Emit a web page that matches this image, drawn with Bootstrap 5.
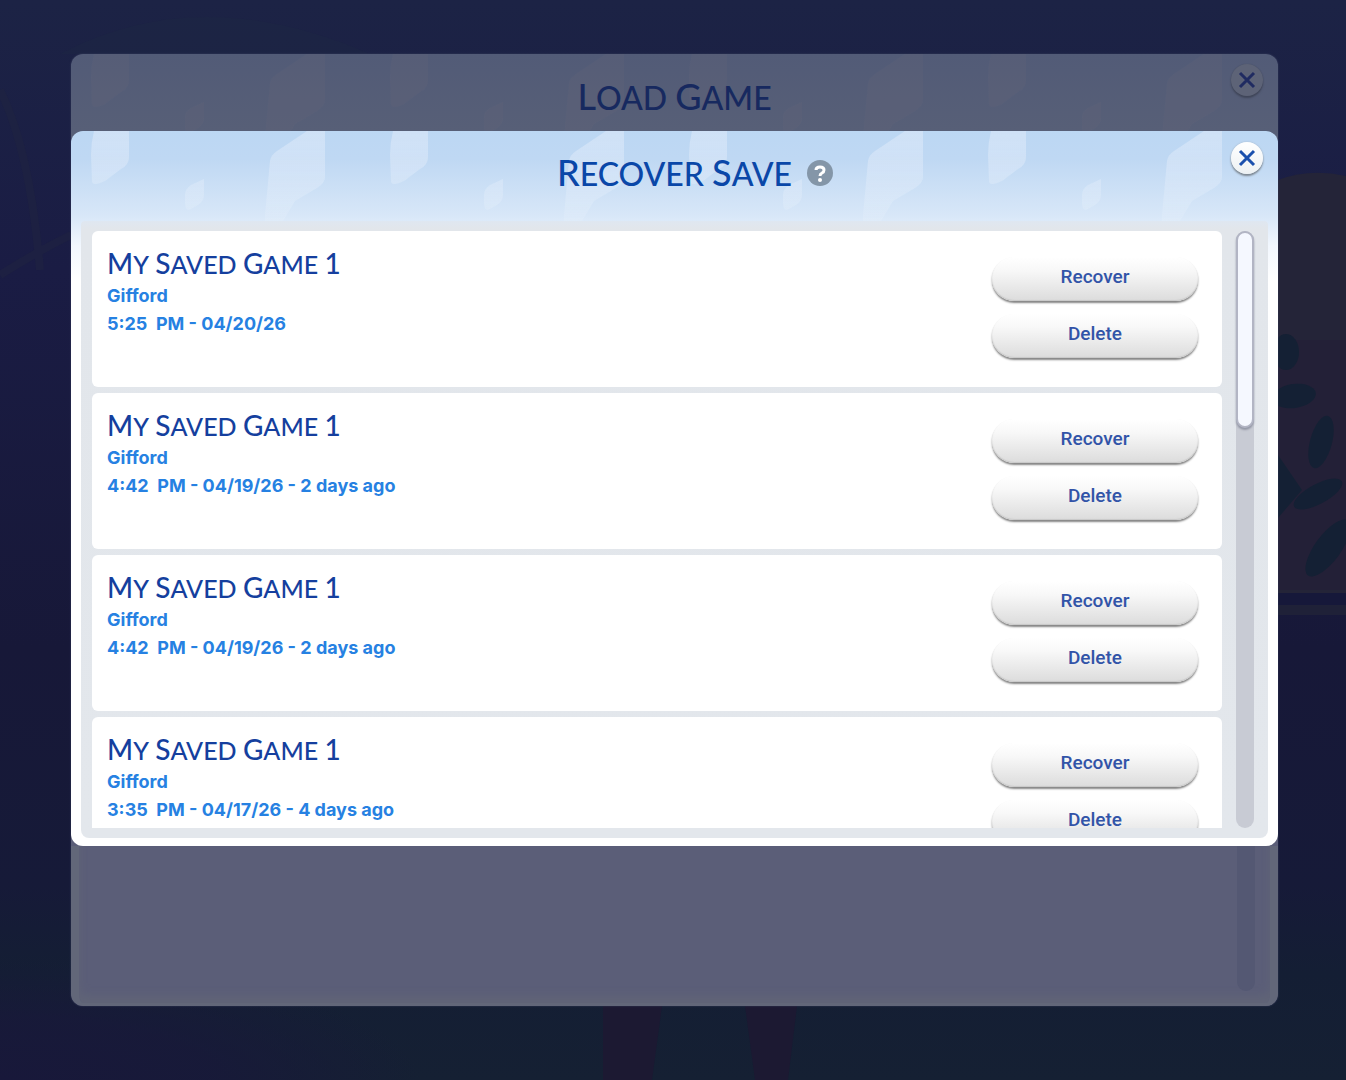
<!DOCTYPE html>
<html lang="en">
<head>
<meta charset="utf-8">
<meta name="viewport" content="width=device-width, initial-scale=1">
<title>Recover Save</title>
<link href="https://cdn.jsdelivr.net/npm/bootstrap@5.3.0/dist/css/bootstrap.min.css" rel="stylesheet">
<style>
  body { background: #181c3f; font-family: Inter, "Liberation Sans", sans-serif; }
  .stage { height: 100vh; min-height: 640px; padding: 54px 68px 74px 71px; }
  .scenery { z-index: 0; }
  .load-panel { z-index: 1; border-radius: 12px; overflow: hidden;
    background: linear-gradient(#525b77 0, #575f77 76px, #5b5e78 130px); box-shadow: 0 0 2px #3b4160; }
  .panel-head { display: grid; grid-template-columns: 1fr auto 1fr; flex: none; }
  .load-head { height: 77px; padding: 10px 15px 0; }
  .recover-head { height: 90px; padding: 11px 15px 0; }
  .shards { z-index: 0; }
  .panel-title { font-family: Lato, sans-serif; font-weight: 500; font-size: 32px; line-height: 40px;
    margin: 10px 0 0; text-transform: uppercase; color: #0a47a8; }
  .load-head .panel-title { margin-top: 12px; color: #17295f; }
  .cap-word { display: inline-block; }
  .panel-title .cap-word::first-letter { font-size: 36px; line-height: 40px; }
  .round-close { width: 32px; height: 32px; border: 0; border-radius: 50%;
    background: linear-gradient(#fff, #edf1f3); box-shadow: 0 2px 2px #7d8791, 0 0 2px #a9b6c6; }
  .round-close.dimmed { background: #5d6377; box-shadow: 0 2px 2px #3f4558, 0 0 1px #454b60; }
  .help-dot { width: 28px; height: 28px; margin: 17px 0 0 14px; }
  .recover-panel { min-height: 0; border-radius: 12px; overflow: hidden; padding-bottom: 8px;
    background: linear-gradient(#bcd7f3 0, #bfd8f3 28px, #d8e7f8 85px, #f2f7fe 115px, #fff 150px); }
  .tray { min-height: 0; margin: 0 10px; padding: 10px 14px 10px 11px; gap: 14px; border-radius: 4px 4px 8px 8px;
    background: linear-gradient(#dfe7f1 0, #e2e6eb 8px, #e3e7ec 100%); }
  .save-list { gap: 6px; overflow-y: auto; scrollbar-width: none; }
  .save-list::-webkit-scrollbar { display: none; }
  .save-row { flex: none; min-height: 156px; padding: 15px 24px 10px 15px; border-radius: 6px; background: #fff; }
  .save-name { font-family: Lato, sans-serif; font-weight: 500; font-size: 25px; line-height: 35px; margin: 0;
    text-transform: uppercase; color: #153f9e; }
  .save-name .cap-word::first-letter { font-size: 28px; line-height: 35px; }
  .save-meta { font-size: 18px; line-height: 28px; font-weight: 700; color: #2681e2; margin: 0; white-space: pre-wrap; }
  .save-actions { gap: 13px; padding-top: 11px; }
  .pill { width: 206px; height: 44px; border: 0; border-radius: 22px; padding: 0 0 4px;
    font-family: Roboto, sans-serif; font-size: 19px; line-height: 40px; font-weight: 500; color: #3254a8;
    background: linear-gradient(#fff 0, #f8f8f8 30%, #dcdcdc 100%);
    box-shadow: inset 0 -1px 1px #c8c8c8, 0 2px 2px #858585; }
  .track { width: 18px; border-radius: 9px; background: #c8cbd4; }
  .thumb { height: 33%; border-radius: 9px; border: 2px solid #b2b5c4; background: #f5f8ff; box-shadow: 0 2px 2px #9296a5; }
  .load-foot { height: 160px; flex: none; padding: 0 15px 12px; border: solid #626779; border-width: 0 8px 3px;
    border-radius: 0 0 12px 12px; box-shadow: inset 0 -8px 8px #606477; }
  .dim-track { width: 18px; background: #545873; border-radius: 0 0 9px 9px; }
</style>
</head>
<body>
<div class="stage position-relative d-flex flex-column">
  <svg class="scenery position-absolute top-0 start-0 w-100 h-100" viewBox="0 0 1346 1080" preserveAspectRatio="none" aria-hidden="true">
    <defs>
      <linearGradient id="night" x1="0" y1="0" x2="0" y2="1">
        <stop offset="0" stop-color="#1c2345"/><stop offset=".25" stop-color="#1a1c44"/>
        <stop offset=".6" stop-color="#171838"/><stop offset=".82" stop-color="#161a38"/>
        <stop offset=".9" stop-color="#141e34"/><stop offset="1" stop-color="#152033"/>
      </linearGradient>
      <radialGradient id="leftshade" cx="0" cy="1" r="1">
        <stop offset="0" stop-color="#18183a"/><stop offset=".5" stop-color="#18183a" stop-opacity=".8"/><stop offset="1" stop-color="#18183a" stop-opacity="0"/>
      </radialGradient>
    </defs>
    <rect width="1346" height="1080" fill="url(#night)"/>
    <path d="M60 54Q200-20 370 54Z" fill="#1e2843" opacity=".4"/>
    <path d="M0 90Q30 150 40 270M0 275Q40 250 71 235" stroke="#20243f" stroke-width="8" fill="none" opacity=".5"/>
    <rect y="960" width="420" height="120" fill="url(#leftshade)"/>
    <path d="M1278 180Q1310 168 1346 176V593H1278Z" fill="#242438"/>
    <path d="M1278 340H1346V590H1278Z" fill="#232037"/>
    <g fill="#142034">
      <ellipse cx="1286" cy="352" rx="13" ry="18"/>
      <ellipse cx="1294" cy="396" rx="22" ry="12" transform="rotate(-8 1294 396)"/>
      <ellipse cx="1321" cy="442" rx="11" ry="27" transform="rotate(15 1321 442)"/>
      <ellipse cx="1318" cy="494" rx="27" ry="10" transform="rotate(-28 1318 494)"/>
      <ellipse cx="1328" cy="548" rx="13" ry="34" transform="rotate(36 1328 548)"/>
      <path d="M1278 455L1302 490L1278 518Z"/>
    </g>
    <path d="M1278 593H1346V605H1278Z" fill="#16183a"/>
    <path d="M1278 605H1346V615H1278Z" fill="#1f2138"/>
    <path d="M603 1006H662L652 1080H603ZM745 1006H797L788 1080H755Z" fill="#1c1932"/>
  </svg>

  <main class="load-panel position-relative d-flex flex-column flex-fill">
    <header class="load-head panel-head position-relative">
      <svg class="shards position-absolute top-0 start-0 w-100 h-100" aria-hidden="true">
        <defs>
          <pattern id="shard-dim" width="299" height="90" patternUnits="userSpaceOnUse">
            <g fill="#626577" fill-opacity=".25">
              <path d="M23 0H58V26Q58 34 50 38L34 50Q21 56 21 50L20 24Q20 12 23 0Z"/>
              <path d="M133 48V64Q133 70 127 74L118 79Q114 79 114 72V64Q114 58 120 54Z"/>
              <path d="M254 0V46Q254 52 246 57L224 70L212 90H194V84L199 30Q200 24 206 20L236 0Z"/>
            </g>
          </pattern>
        </defs>
        <rect width="100%" height="100%" fill="url(#shard-dim)"/>
      </svg>
      <span></span>
      <h1 class="panel-title position-relative"><span class="cap-word">Load</span> <span class="cap-word">Game</span></h1>
      <button type="button" class="round-close dimmed position-relative ms-auto d-grid p-0" aria-label="Close Load Game">
        <svg class="m-auto" width="18" height="18" viewBox="0 0 18 18" aria-hidden="true"><path d="M2 2L16 16M16 2L2 16" stroke="#202b61" stroke-width="3"/></svg>
      </button>
    </header>

    <section class="recover-panel d-flex flex-column flex-fill" aria-labelledby="recover-title">
      <header class="recover-head panel-head position-relative">
        <svg class="shards position-absolute top-0 start-0 w-100 h-100" aria-hidden="true">
          <defs>
            <linearGradient id="shard-fade" x1="0" y1="0" x2="0" y2="90" gradientUnits="userSpaceOnUse">
              <stop offset="0" stop-color="#dce8f9" stop-opacity=".6"/><stop offset="1" stop-color="#e2eefa" stop-opacity=".4"/>
            </linearGradient>
            <pattern id="shard-light" width="299" height="90" patternUnits="userSpaceOnUse">
              <g fill="url(#shard-fade)">
                <path d="M23 0H58V26Q58 34 50 38L34 50Q21 56 21 50L20 24Q20 12 23 0Z"/>
                <path d="M133 48V64Q133 70 127 74L118 79Q114 79 114 72V64Q114 58 120 54Z"/>
                <path d="M254 0V46Q254 52 246 57L224 70L212 90H194V84L199 30Q200 24 206 20L236 0Z"/>
              </g>
            </pattern>
          </defs>
          <rect width="100%" height="100%" fill="url(#shard-light)"/>
        </svg>
        <span></span>
        <h2 id="recover-title" class="panel-title position-relative"><span class="cap-word">Recover</span> <span class="cap-word">Save</span></h2>
        <div class="d-flex align-items-start position-relative">
          <button type="button" class="help-dot btn p-0 border-0 d-flex" aria-label="Help">
            <svg width="28" height="28" viewBox="0 0 28 28" aria-hidden="true"><circle cx="14" cy="14" r="13" fill="#8496a8"/><path d="M10 11Q10 8 14 8T18 11Q18 13 16 14Q14 15 14 17" fill="none" stroke="#fff" stroke-width="3"/><circle cx="14" cy="21" r="2" fill="#fff"/></svg>
          </button>
          <button type="button" class="round-close ms-auto d-grid p-0" aria-label="Close Recover Save">
            <svg class="m-auto" width="18" height="18" viewBox="0 0 18 18" aria-hidden="true"><path d="M2 2L16 16M16 2L2 16" stroke="#1b50ad" stroke-width="3"/></svg>
          </button>
        </div>
      </header>

      <div class="tray d-flex flex-fill">
        <div class="save-list d-flex flex-column flex-fill">
          <article class="save-row d-flex justify-content-between">
            <div>
              <h3 class="save-name"><span class="cap-word">My</span> <span class="cap-word">Saved</span> <span class="cap-word">Game</span> <span class="cap-word">1</span></h3>
              <p class="save-meta">Gifford</p>
              <p class="save-meta">5:25  PM - 04/20/26</p>
            </div>
            <div class="save-actions d-flex flex-column"><button type="button" class="pill">Recover</button><button type="button" class="pill">Delete</button></div>
          </article>
          <article class="save-row d-flex justify-content-between">
            <div>
              <h3 class="save-name"><span class="cap-word">My</span> <span class="cap-word">Saved</span> <span class="cap-word">Game</span> <span class="cap-word">1</span></h3>
              <p class="save-meta">Gifford</p>
              <p class="save-meta">4:42  PM - 04/19/26 - 2 days ago</p>
            </div>
            <div class="save-actions d-flex flex-column"><button type="button" class="pill">Recover</button><button type="button" class="pill">Delete</button></div>
          </article>
          <article class="save-row d-flex justify-content-between">
            <div>
              <h3 class="save-name"><span class="cap-word">My</span> <span class="cap-word">Saved</span> <span class="cap-word">Game</span> <span class="cap-word">1</span></h3>
              <p class="save-meta">Gifford</p>
              <p class="save-meta">4:42  PM - 04/19/26 - 2 days ago</p>
            </div>
            <div class="save-actions d-flex flex-column"><button type="button" class="pill">Recover</button><button type="button" class="pill">Delete</button></div>
          </article>
          <article class="save-row d-flex justify-content-between">
            <div>
              <h3 class="save-name"><span class="cap-word">My</span> <span class="cap-word">Saved</span> <span class="cap-word">Game</span> <span class="cap-word">1</span></h3>
              <p class="save-meta">Gifford</p>
              <p class="save-meta">3:35  PM - 04/17/26 - 4 days ago</p>
            </div>
            <div class="save-actions d-flex flex-column"><button type="button" class="pill">Recover</button><button type="button" class="pill">Delete</button></div>
          </article>
        </div>
        <div class="track flex-shrink-0"><div class="thumb"></div></div>
      </div>
    </section>

    <div class="load-foot d-flex justify-content-end"><div class="dim-track"></div></div>
  </main>
</div>
<script src="https://cdn.jsdelivr.net/npm/bootstrap@5.3.0/dist/js/bootstrap.bundle.min.js"></script>
</body>
</html>
